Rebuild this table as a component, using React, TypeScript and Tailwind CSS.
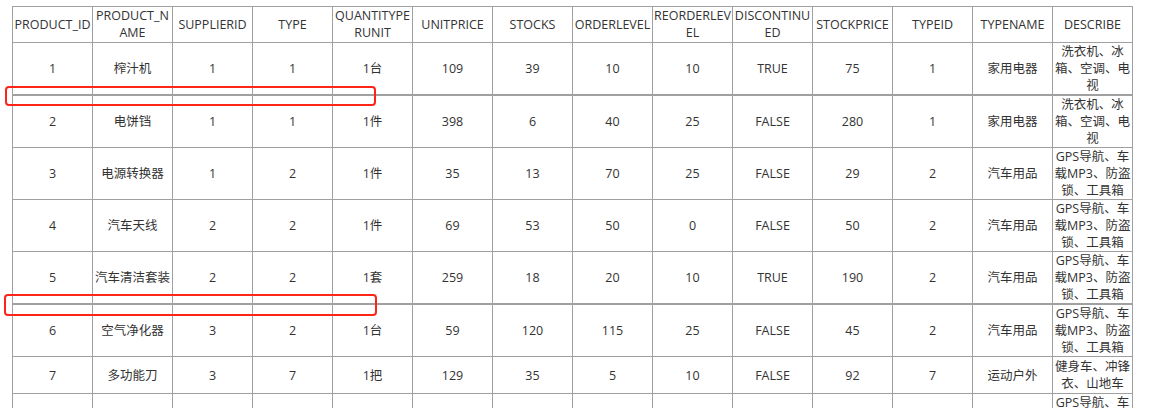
import React from 'react';

const headers: string[][] = [
  ['PRODUCT_ID'],
  ['PRODUCT_N', 'AME'],
  ['SUPPLIERID'],
  ['TYPE'],
  ['QUANTITYPE', 'RUNIT'],
  ['UNITPRICE'],
  ['STOCKS'],
  ['ORDERLEVEL'],
  ['REORDERLEV', 'EL'],
  ['DISCONTINU', 'ED'],
  ['STOCKPRICE'],
  ['TYPEID'],
  ['TYPENAME'],
  ['DESCRIBE'],
];

const home = ['洗衣机、冰', '箱、空调、电', '视'];
const car = ['GPS导航、车', '载MP3、防盗', '锁、工具箱'];
const sport = ['健身车、冲锋', '衣、山地车'];

type Row = { cells: string[]; describe: string[]; thick?: boolean };

const rows: Row[] = [
  { cells: ['1', '榨汁机', '1', '1', '1台', '109', '39', '10', '10', 'TRUE', '75', '1', '家用电器'], describe: home, thick: true },
  { cells: ['2', '电饼铛', '1', '1', '1件', '398', '6', '40', '25', 'FALSE', '280', '1', '家用电器'], describe: home },
  { cells: ['3', '电源转换器', '1', '2', '1件', '35', '13', '70', '25', 'FALSE', '29', '2', '汽车用品'], describe: car },
  { cells: ['4', '汽车天线', '2', '2', '1件', '69', '53', '50', '0', 'FALSE', '50', '2', '汽车用品'], describe: car },
  { cells: ['5', '汽车清洁套装', '2', '2', '1套', '259', '18', '20', '10', 'TRUE', '190', '2', '汽车用品'], describe: car, thick: true },
  { cells: ['6', '空气净化器', '3', '2', '1台', '59', '120', '115', '25', 'FALSE', '45', '2', '汽车用品'], describe: car },
  { cells: ['7', '多功能刀', '3', '7', '1把', '129', '35', '5', '10', 'FALSE', '92', '7', '运动户外'], describe: sport },
  { cells: ['', '', '', '', '', '', '', '', '', '', '', '', ''], describe: car },
];

export default function App() {
  return (
    <div
      className="relative min-h-screen bg-white pl-[12px] pt-[6px] text-[#333] text-[12.5px] leading-[17px]"
      style={{ fontFamily: '"Open Sans", "Noto Sans CJK SC", sans-serif' }}
    >
      <table className="table-fixed border-collapse w-[1120px]">
        <thead>
          <tr>
            {headers.map((h, i) => (
              <th key={i} className="w-[80px] border border-[#a0a0a0] p-0 pb-px font-normal text-center align-middle whitespace-nowrap">
                {h.map((l, j) => (
                  <div key={j}>{l}</div>
                ))}
              </th>
            ))}
          </tr>
        </thead>
        <tbody>
          {rows.map((r, i) => (
            <tr key={i} className={r.thick ? 'border-b-2 border-[#a0a0a0]' : ''}>
              {r.cells.map((c, j) => (
                <td
                  key={j}
                  className={`border border-[#a0a0a0] p-0 text-center align-middle whitespace-nowrap ${r.thick ? 'border-b-2' : ''}`}
                >
                  {c}
                </td>
              ))}
              <td
                className={`border border-[#a0a0a0] p-0 text-center align-middle whitespace-nowrap ${r.thick ? 'border-b-2' : ''} ${r.describe.length === 2 ? 'py-px' : ''}`}
              >
                {r.describe.map((l, j) => (
                  <div key={j}>{l}</div>
                ))}
              </td>
            </tr>
          ))}
        </tbody>
      </table>

      {/* annotation boxes */}
      <div className="absolute left-[5px] top-[86px] w-[371px] h-[20px] border-2 border-[#ff2418] rounded-[4px]" />
      <div className="absolute left-[4px] top-[294px] w-[373px] h-[22px] border-2 border-[#ff2418] rounded-[4px]" />
    </div>
  );
}
